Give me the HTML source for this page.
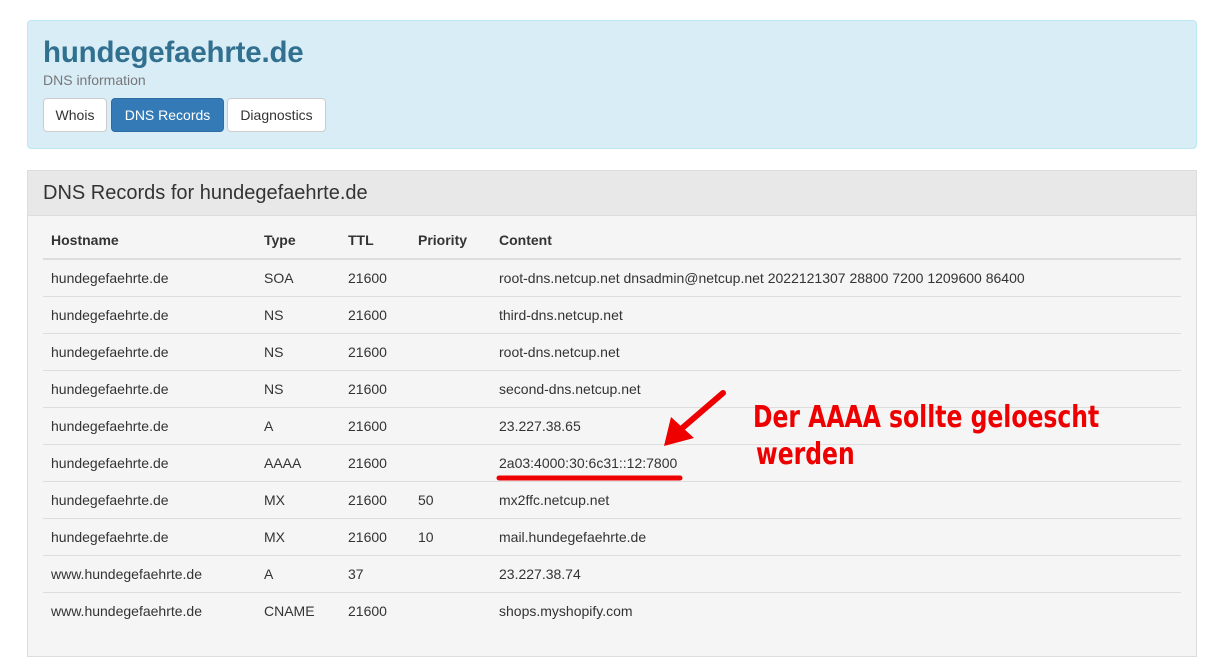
<!DOCTYPE html>
<html><head><meta charset="utf-8"><style>
body{margin:0;background:#fff;font-family:"Liberation Sans",Helvetica,Arial,sans-serif;color:#333;width:1210px;height:669px;overflow:hidden;position:relative}
.jumbo{position:absolute;left:27px;top:20px;width:1168px;height:127px;background:#d9edf7;border:1px solid #bce8f1;border-radius:4px}
.jumbo h1{position:absolute;left:15px;top:15px;margin:0;font-size:29.5px;font-weight:bold;color:#31708f;letter-spacing:-0.2px}
.jumbo .sub{position:absolute;left:15px;top:51px;font-size:14px;color:#777}
.btn{position:absolute;top:77px;line-height:32px;border:1px solid #ccc;border-radius:4px;background:#fff;font-size:14px;text-align:center;box-sizing:border-box;height:34px}
.panel{position:absolute;left:27px;top:170px;width:1168px;height:485px;border:1px solid #ddd;background:#f5f5f5}
.ph{height:45px;background:#e8e8e8;border-bottom:1px solid #ddd;box-sizing:border-box;font-size:20px;font-weight:300;padding:11px 0 0 15px;color:#333}
table{position:absolute;left:15px;top:51px;width:1138px;border-collapse:collapse;font-size:14px}
th{text-align:left;font-weight:bold;height:36px;border-bottom:2px solid #ddd;padding:0 8px}
td{height:36px;border-top:1px solid #ddd;padding:0 8px}
.ann{position:absolute;left:753px;color:#e00;font-weight:bold;font-size:30px;white-space:nowrap;transform-origin:0 0;transform:scaleX(0.87);font-family:"DejaVu Sans Condensed","Liberation Sans Narrow","Liberation Sans",sans-serif}
</style></head><body>
<div class="jumbo">
<h1>hundegefaehrte.de</h1>
<div class="sub">DNS information</div>
<div class="btn" style="left:15px;width:64px">Whois</div>
<div class="btn" style="left:83px;width:113px;background:#337ab7;border-color:#2e6da4;color:#fff">DNS Records</div>
<div class="btn" style="left:199px;width:99px">Diagnostics</div>
</div>
<div class="panel">
<div class="ph">DNS Records for hundegefaehrte.de</div>
<table>
<tr><th style="width:197px">Hostname</th><th style="width:68px">Type</th><th style="width:54px">TTL</th><th style="width:65px">Priority</th><th>Content</th></tr>
<tr><td>hundegefaehrte.de</td><td>SOA</td><td>21600</td><td></td><td>root-dns.netcup.net dnsadmin@netcup.net 2022121307 28800 7200 1209600 86400</td></tr>
<tr><td>hundegefaehrte.de</td><td>NS</td><td>21600</td><td></td><td>third-dns.netcup.net</td></tr>
<tr><td>hundegefaehrte.de</td><td>NS</td><td>21600</td><td></td><td>root-dns.netcup.net</td></tr>
<tr><td>hundegefaehrte.de</td><td>NS</td><td>21600</td><td></td><td>second-dns.netcup.net</td></tr>
<tr><td>hundegefaehrte.de</td><td>A</td><td>21600</td><td></td><td>23.227.38.65</td></tr>
<tr><td>hundegefaehrte.de</td><td>AAAA</td><td>21600</td><td></td><td>2a03:4000:30:6c31::12:7800</td></tr>
<tr><td>hundegefaehrte.de</td><td>MX</td><td>21600</td><td>50</td><td>mx2ffc.netcup.net</td></tr>
<tr><td>hundegefaehrte.de</td><td>MX</td><td>21600</td><td>10</td><td>mail.hundegefaehrte.de</td></tr>
<tr><td>www.hundegefaehrte.de</td><td>A</td><td>37</td><td></td><td>23.227.38.74</td></tr>
<tr><td>www.hundegefaehrte.de</td><td>CNAME</td><td>21600</td><td></td><td>shops.myshopify.com</td></tr>
</table>
</div>
<div class="ann" style="top:400px">Der AAAA sollte geloescht</div>
<div class="ann" style="top:437px;left:756px">werden</div>
<svg style="position:absolute;left:0;top:0" width="1210" height="669">
<line x1="499" y1="478" x2="680" y2="478" stroke="#e00" stroke-width="5" stroke-linecap="round"/>
<line x1="723" y1="393" x2="680" y2="430" stroke="#e00" stroke-width="6" stroke-linecap="round"/>
<polygon points="664,446 671,417 694,438" fill="#e00"/>
</svg>
</body></html>
